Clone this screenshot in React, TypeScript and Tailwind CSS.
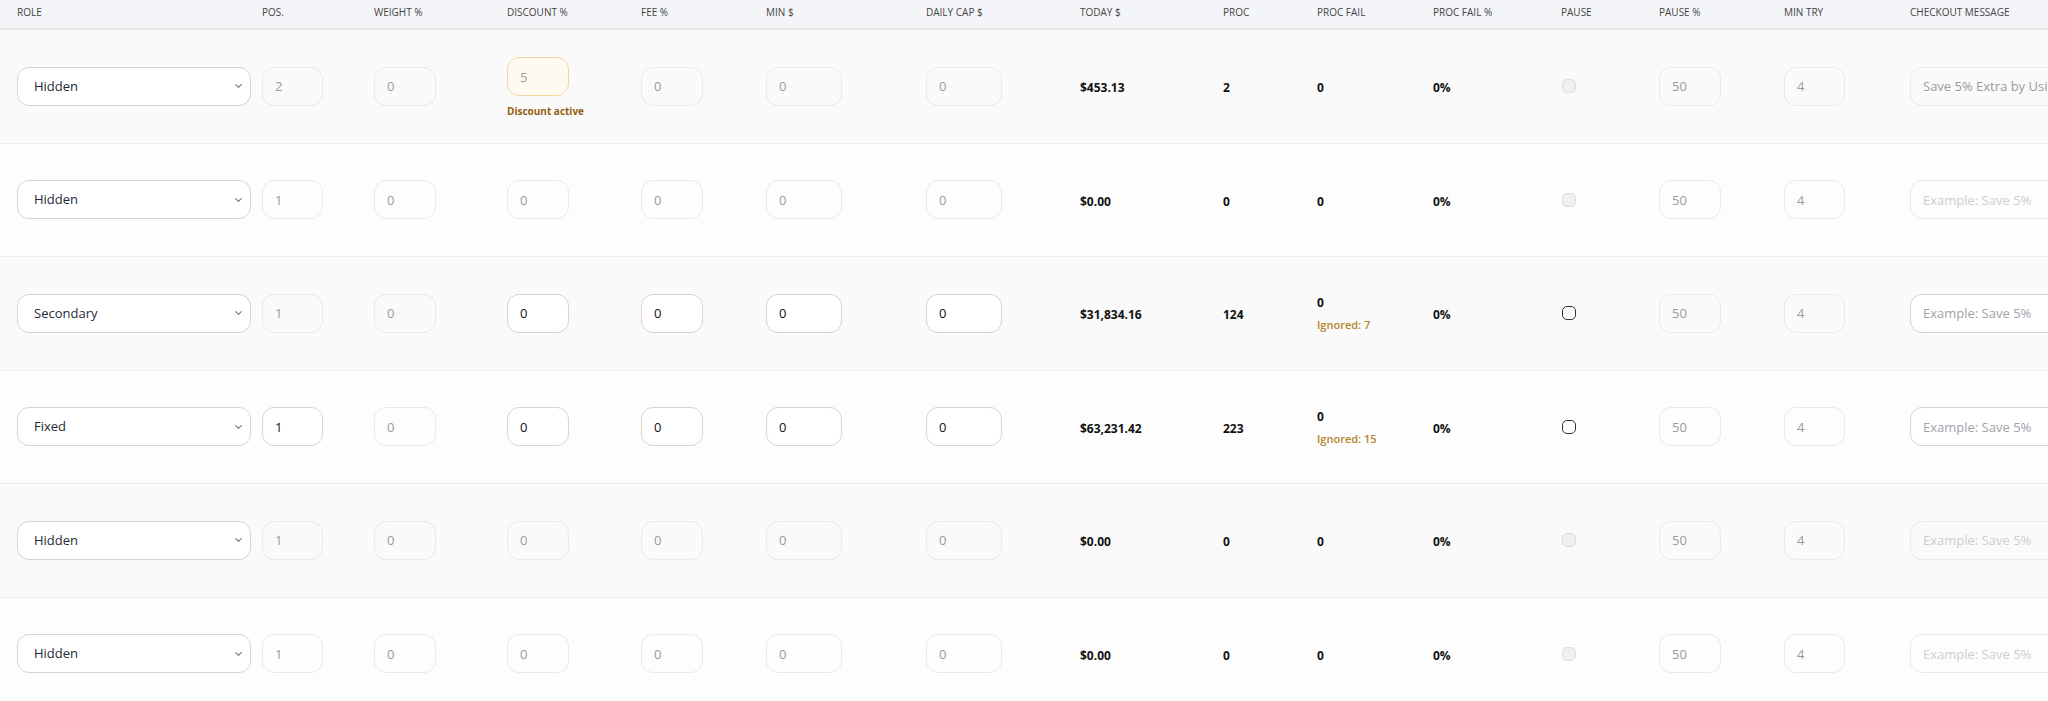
import { ChevronDown } from "lucide-react";

interface RowData {
  role: string;
  pos: string;
  posActive?: boolean;
  discount: string;
  discountActive?: boolean;
  editable?: boolean;
  today: string;
  proc: string;
  ignored?: string;
  checkout?: string;
  shade: boolean;
}

const rows: RowData[] = [
  { role: "Hidden", pos: "2", discount: "5", discountActive: true, today: "$453.13", proc: "2", checkout: "Save 5% Extra by Using", shade: true },
  { role: "Hidden", pos: "1", discount: "0", today: "$0.00", proc: "0", shade: false },
  { role: "Secondary", pos: "1", discount: "0", editable: true, today: "$31,834.16", proc: "124", ignored: "Ignored: 7", shade: true },
  { role: "Fixed", pos: "1", posActive: true, discount: "0", editable: true, today: "$63,231.42", proc: "223", ignored: "Ignored: 15", shade: false },
  { role: "Hidden", pos: "1", discount: "0", today: "$0.00", proc: "0", shade: true },
  { role: "Hidden", pos: "1", discount: "0", today: "$0.00", proc: "0", shade: false },
];

function Field({
  value,
  placeholder,
  active,
  amber,
  width,
}: {
  value?: string;
  placeholder?: string;
  active?: boolean;
  amber?: boolean;
  width: string;
}) {
  let tone = "border-[#ebe8e5] bg-transparent text-[#9a9a9a] placeholder:text-[#cbced3]";
  if (active) tone = "border-[#d9d3cb] bg-white text-[#111] placeholder:text-[#9ea3aa]";
  if (amber) tone = "border-[#f2d89f] bg-[#fffaf0] text-[#9a9a9a]";
  return (
    <input
      readOnly
      defaultValue={value}
      placeholder={placeholder}
      className={`${width} h-[39px] rounded-xl border px-3 text-[13px] outline-none ${tone}`}
    />
  );
}

function Stat({ children }: { children: React.ReactNode }) {
  return <span className="text-[12px] font-bold text-[#111]">{children}</span>;
}

export default function App() {
  return (
    <div className="w-[2048px] h-[701px] overflow-hidden bg-[#fcfcfc] font-['Open_Sans',sans-serif]">
      {/* Header */}
      <div className="flex h-[30px] border-b-2 border-[#e7e7e9] bg-[#f4f5f8] pt-[6px] text-[10px] uppercase leading-[13px] text-[#444]">
        <div className="w-[262px] shrink-0 pl-[17px]">Role</div>
        <div className="w-[112px] shrink-0">Pos.</div>
        <div className="w-[133px] shrink-0">Weight %</div>
        <div className="w-[134px] shrink-0">Discount %</div>
        <div className="w-[125px] shrink-0">Fee %</div>
        <div className="w-[160px] shrink-0">Min $</div>
        <div className="w-[154px] shrink-0">Daily cap $</div>
        <div className="w-[143px] shrink-0">Today $</div>
        <div className="w-[94px] shrink-0">Proc</div>
        <div className="w-[116px] shrink-0">Proc fail</div>
        <div className="w-[128px] shrink-0">Proc fail %</div>
        <div className="w-[98px] shrink-0">Pause</div>
        <div className="w-[125px] shrink-0">Pause %</div>
        <div className="w-[126px] shrink-0">Min try</div>
        <div className="shrink-0">Checkout message</div>
      </div>

      {/* Rows */}
      {rows.map((r, i) => (
        <div
          key={i}
          className={`flex h-[113.5px] items-center border-b border-[#ececec] ${r.shade ? "bg-[#fafafa]" : "bg-[#fdfdfd]"}`}
        >
          <div className="w-[262px] shrink-0 pl-[17px]">
            <div className="relative w-[234px] h-[39px]">
              <select
                defaultValue={r.role}
                className="h-full w-full appearance-none rounded-xl border border-[#d9d3cb] bg-white pl-4 text-[13px] text-[#1f2937] outline-none"
              >
                <option>Hidden</option>
                <option>Secondary</option>
                <option>Fixed</option>
                <option>Primary</option>
              </select>
              <ChevronDown className="pointer-events-none absolute right-[7px] top-1/2 h-[11px] w-[11px] -translate-y-1/2 text-[#777]" strokeWidth={2.5} />
            </div>
          </div>
          <div className="w-[112px] shrink-0">
            <Field value={r.pos} active={r.posActive} width="w-[61px]" />
          </div>
          <div className="w-[133px] shrink-0">
            <Field value="0" width="w-[62px]" />
          </div>
          <div className="w-[134px] shrink-0">
            {r.discountActive ? (
              <div className="flex flex-col gap-[9px] pt-[2px]">
                <Field value={r.discount} amber width="w-[62px]" />
                <span className="text-[10px] font-bold leading-[12px] text-[#93600f]">Discount active</span>
              </div>
            ) : (
              <Field value={r.discount} active={r.editable} width="w-[62px]" />
            )}
          </div>
          <div className="w-[125px] shrink-0">
            <Field value="0" active={r.editable} width="w-[62px]" />
          </div>
          <div className="w-[160px] shrink-0">
            <Field value="0" active={r.editable} width="w-[76px]" />
          </div>
          <div className="w-[154px] shrink-0">
            <Field value="0" active={r.editable} width="w-[76px]" />
          </div>
          <div className="w-[143px] shrink-0">
            <Stat>{r.today}</Stat>
          </div>
          <div className="w-[94px] shrink-0">
            <Stat>{r.proc}</Stat>
          </div>
          <div className="w-[116px] shrink-0">
            {r.ignored ? (
              <div className="flex flex-col gap-[6px]">
                <Stat>0</Stat>
                <span className="text-[11px] font-semibold leading-[14px] text-[#b5852c]">{r.ignored}</span>
              </div>
            ) : (
              <Stat>0</Stat>
            )}
          </div>
          <div className="w-[128px] shrink-0">
            <Stat>0%</Stat>
          </div>
          <div className="w-[98px] shrink-0 pl-px">
            {r.editable ? (
              <div className="h-[14px] w-[14px] rounded-[5px] border-[1.5px] border-[#333] bg-white" />
            ) : (
              <div className="h-[14px] w-[14px] rounded-[5px] border border-[#dcdde0] bg-[#eff0f3]" />
            )}
          </div>
          <div className="w-[125px] shrink-0">
            <Field value="50" width="w-[62px]" />
          </div>
          <div className="w-[126px] shrink-0">
            <Field value="4" width="w-[61px]" />
          </div>
          <div className="shrink-0">
            <Field
              value={r.checkout}
              placeholder="Example: Save 5%"
              active={r.editable}
              width="w-[300px]"
            />
          </div>
        </div>
      ))}
    </div>
  );
}
